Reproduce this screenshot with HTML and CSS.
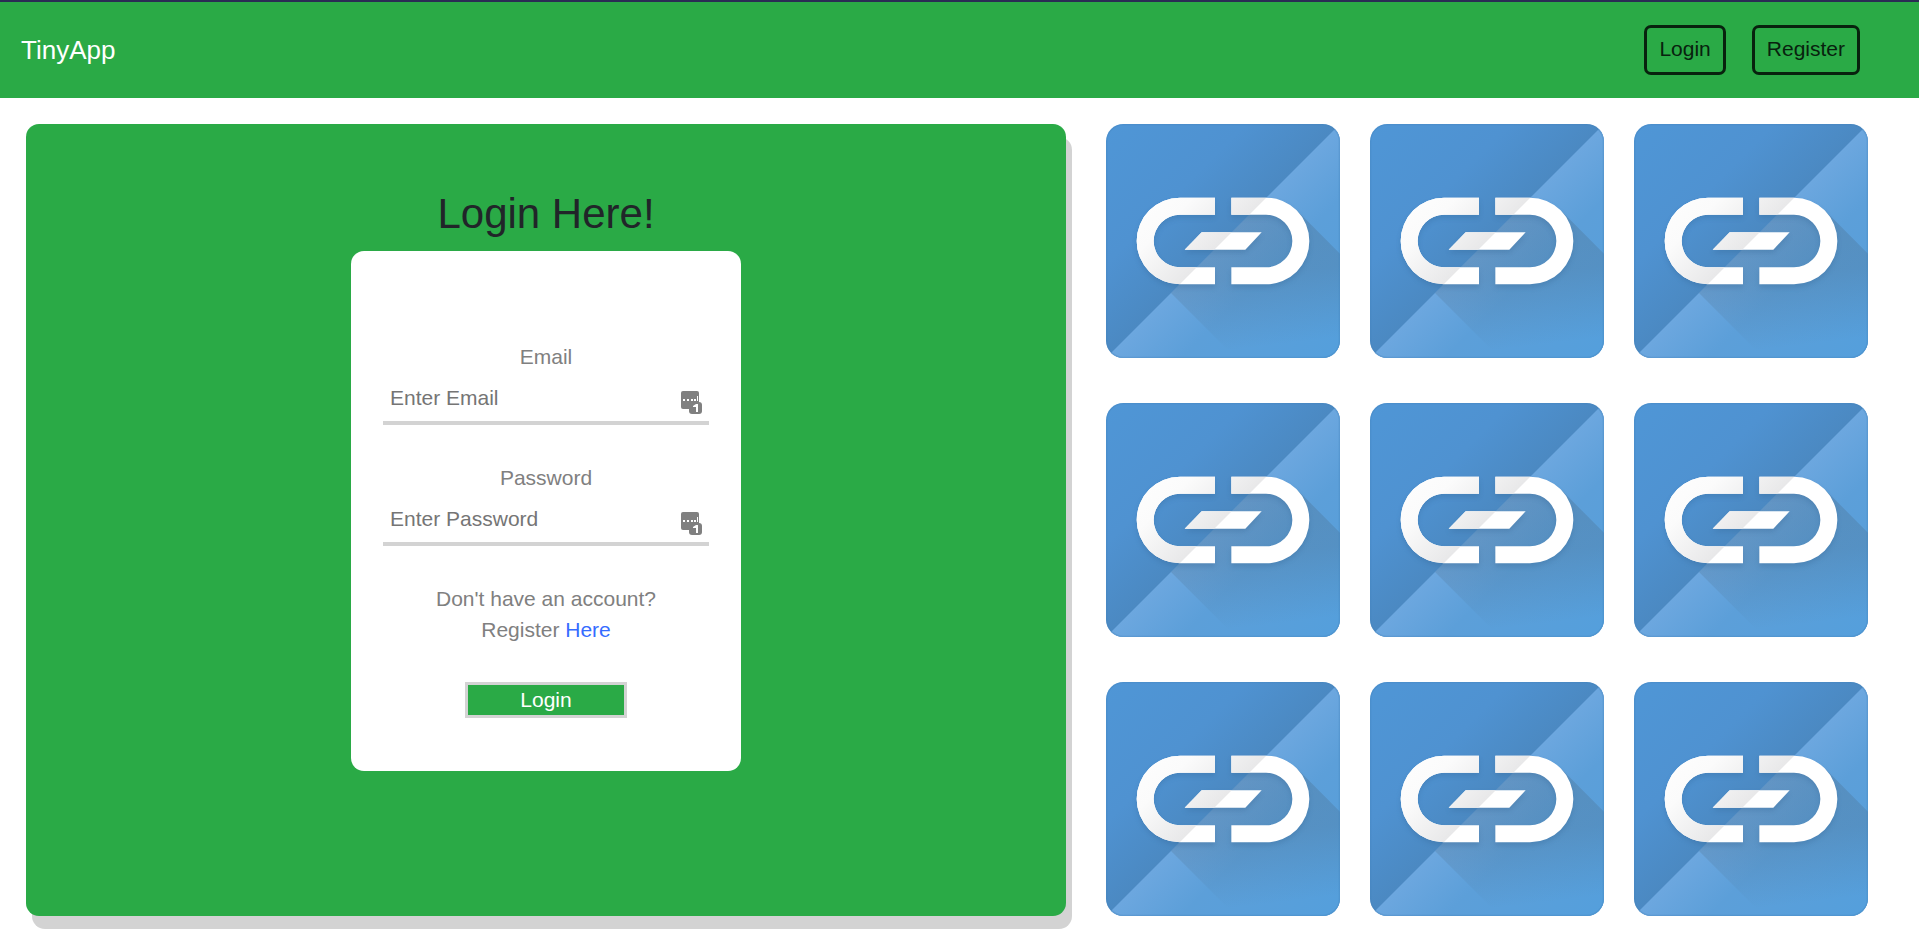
FILE: index.html
```
<!DOCTYPE html>
<html lang="en">
<head>
  <meta charset="utf-8">
  <title>TinyApp</title>
  <link rel="stylesheet" href="styles.css">
</head>
<body>
  <svg class="defs" width="0" height="0" aria-hidden="true">
    <defs>
      <linearGradient id="base" x1="0" y1="0" x2="1" y2="1">
        <stop offset="0" stop-color="#4f96d6"/>
        <stop offset="0.3" stop-color="#4f92d1"/>
        <stop offset="0.5" stop-color="#4b89c2"/>
      </linearGradient>
      <linearGradient id="fold" x1="0" y1="0" x2="1" y2="1">
        <stop offset="0.5" stop-color="#6ca7df"/>
        <stop offset="0.66" stop-color="#5c9fd9"/>
        <stop offset="1" stop-color="#549fdc"/>
      </linearGradient>
      <linearGradient id="cast" gradientUnits="userSpaceOnUse" x1="400" y1="250" x2="450" y2="670">
        <stop offset="0" stop-color="#48647c" stop-opacity="0.28"/>
        <stop offset="0.5" stop-color="#48647c" stop-opacity="0.24"/>
        <stop offset="1" stop-color="#48647c" stop-opacity="0"/>
      </linearGradient>
      <linearGradient id="metal" gradientUnits="userSpaceOnUse" x1="130" y1="130" x2="351" y2="351">
        <stop offset="0" stop-color="#ffffff"/>
        <stop offset="0.5" stop-color="#fbfbfb"/>
        <stop offset="1" stop-color="#e8e8e9"/>
      </linearGradient>
      <filter id="soft" x="-10%" y="-10%" width="120%" height="130%">
        <feGaussianBlur stdDeviation="8"/>
      </filter>
      <clipPath id="upper"><path d="M0 0H702L0 702Z"/></clipPath>
      <clipPath id="frame"><rect width="702" height="702" rx="52"/></clipPath>
      <g id="chain">
        <path d="M327 221H222a130 130 0 0 0 0 260H327V430H222a79 79 0 0 1 0-158H327Z"/>
        <path d="M376 221H480a130 130 0 0 1 0 260H376V430H480a79 79 0 0 0 0-158H376Z"/>
        <path d="M236 377L287 325H467L418 377Z"/>
      </g>
    </defs>
    <symbol id="link-tile" viewBox="0 0 702 702">
      <g clip-path="url(#frame)">
        <rect width="702" height="702" fill="url(#base)"/>
        <path d="M702 0V702H0Z" fill="url(#fold)"/>
        <path d="M195 507L443 259H572L702 389V702H390Z" fill="url(#cast)"/>
        <use href="#chain" y="10" fill="#2d5e8d" opacity="0.25" filter="url(#soft)"/>
        <use href="#chain" fill="#fff"/>
        <use href="#chain" fill="url(#metal)" clip-path="url(#upper)"/>
        <rect x="2" y="2" width="698" height="698" rx="50" fill="none" stroke="#4380b8" stroke-width="4" opacity="0.3"/>
      </g>
    </symbol>
    <symbol id="key-fill" viewBox="0 0 21 23">
      <rect width="18" height="18" rx="2" fill="#808080"/>
      <rect x="8" y="11" width="13" height="12" rx="3" fill="#808080"/>
      <path d="M2 8h2v2H2zM6 8h2v2H6zM10 8h2v2h-2zM13 8h2v2h-2zM16 5h1v5h-1z" fill="#fff"/>
      <path d="M12 15L15 13H17V21H15V16H12Z" fill="#fff"/>
    </symbol>
  </svg>

  <header class="navbar">
    <a class="brand" href="#">TinyApp</a>
    <nav class="nav-actions">
      <button class="nav-button" type="button">Login</button>
      <button class="nav-button" type="button">Register</button>
    </nav>
  </header>

  <main class="content">
    <section class="panel">
      <h1 class="title">Login Here!</h1>
      <form class="login-form">
        <div class="field">
          <label for="email">Email</label>
          <div class="control">
            <input id="email" type="email" placeholder="Enter Email">
            <svg class="key-icon" aria-hidden="true"><use href="#key-fill"/></svg>
          </div>
        </div>
        <div class="field">
          <label for="password">Password</label>
          <div class="control">
            <input id="password" type="password" placeholder="Enter Password">
            <svg class="key-icon" aria-hidden="true"><use href="#key-fill"/></svg>
          </div>
        </div>
        <p class="signup">Don't have an account?<br>Register <a href="#">Here</a></p>
        <button class="submit" type="submit">Login</button>
      </form>
    </section>

    <section class="tiles" aria-label="Links">
      <svg class="tile"><use href="#link-tile"/></svg>
      <svg class="tile"><use href="#link-tile"/></svg>
      <svg class="tile"><use href="#link-tile"/></svg>
      <svg class="tile"><use href="#link-tile"/></svg>
      <svg class="tile"><use href="#link-tile"/></svg>
      <svg class="tile"><use href="#link-tile"/></svg>
      <svg class="tile"><use href="#link-tile"/></svg>
      <svg class="tile"><use href="#link-tile"/></svg>
      <svg class="tile"><use href="#link-tile"/></svg>
    </section>
  </main>
</body>
</html>
```
FILE: styles.css
```
* {
  box-sizing: border-box;
}

body {
  margin: 0;
  background: #fff;
  color: #212529;
  font: 21px/31px "Liberation Sans", Arial, sans-serif;
}

button,
input {
  font: inherit;
}

a {
  text-decoration: none;
}

.defs {
  position: absolute;
}

.navbar {
  display: flex;
  align-items: center;
  justify-content: space-between;
  padding: 23px 59px 23px 21px;
  border-top: 2px solid #2a2c54;
  background: #2aaa46;
}

.brand {
  color: #fff;
  font-size: 26px;
}

.nav-actions {
  display: flex;
  gap: 26px;
}

.nav-button {
  padding: 5px 12px 8px;
  border: 3px solid #08220e;
  border-radius: 7px;
  background: transparent;
  color: #08220e;
}

.content {
  display: grid;
  grid-template-columns: minmax(0, 1040fr) minmax(0, 762fr);
  gap: 40px;
  padding: 26px 51px 30px 26px;
}

.panel {
  display: flex;
  flex-direction: column;
  align-items: center;
  padding: 65px 26px;
  border-radius: 13px;
  background: #2aaa46;
  box-shadow: 6px 13px 0 #d3d3d3;
}

.title {
  margin: 0 0 12px;
  font-size: 42px;
  font-weight: 400;
  line-height: 50px;
}

.login-form {
  display: flex;
  flex-direction: column;
  align-items: center;
  gap: 37px;
  width: 390px;
  max-width: 100%;
  padding: 90px 32px 53px;
  border-radius: 13px;
  background: #fff;
  color: #808080;
  text-align: center;
}

.field {
  display: flex;
  flex-direction: column;
  gap: 3px;
  width: 100%;
}

.control {
  position: relative;
}

.control input {
  display: block;
  width: 100%;
  height: 50px;
  padding: 0 40px 0 7px;
  border: 0;
  border-bottom: 4px solid #d3d3d3;
  background: transparent;
  color: #495057;
}

.control input::placeholder {
  color: #757575;
}

.key-icon {
  position: absolute;
  top: 16px;
  right: 7px;
  width: 21px;
  height: 23px;
}

.signup {
  margin: 0;
}

.signup a {
  color: #366cff;
}

.submit {
  width: 162px;
  padding: 0;
  border: 3px solid #d3d3d3;
  background: #2aaa46;
  color: #fff;
  line-height: 30px;
}

.tiles {
  display: grid;
  grid-template-columns: repeat(3, minmax(0, 1fr));
  gap: 45px 30px;
  align-content: start;
}

.tile {
  display: block;
  width: 100%;
  aspect-ratio: 1;
}
```
